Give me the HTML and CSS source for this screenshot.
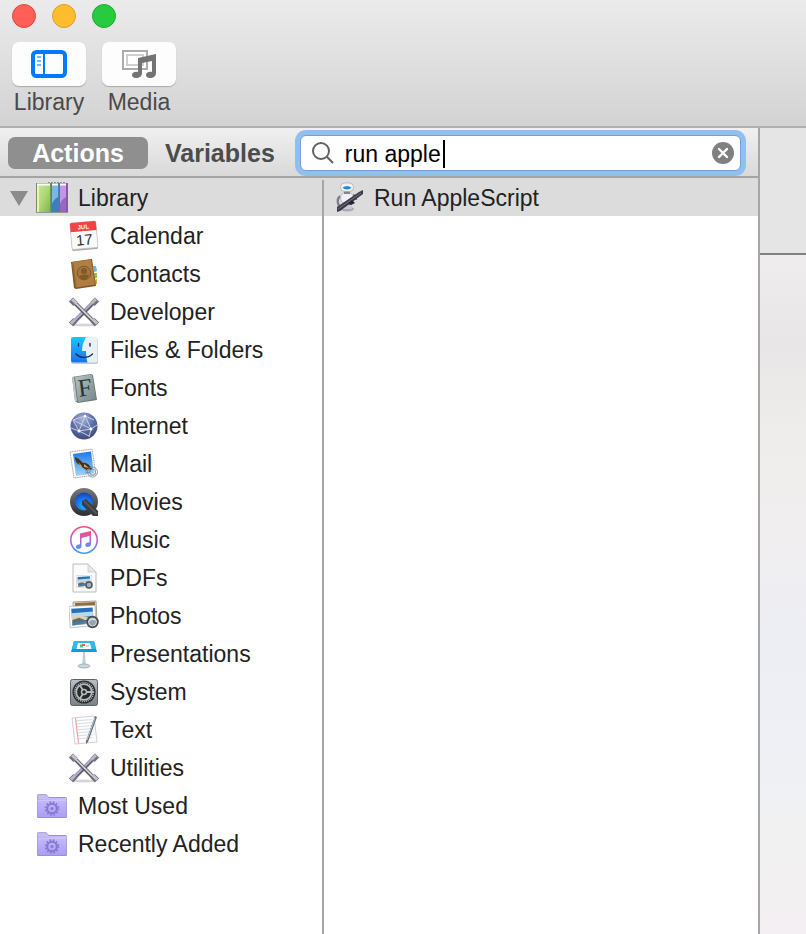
FILE: index.html
```html
<!DOCTYPE html>
<html lang="en">
<head>
<meta charset="utf-8">
<title>Automator</title>
<link rel="stylesheet" href="styles.css">
</head>
<body>
<svg class="defs" aria-hidden="true">
  <defs>
    <linearGradient id="folder" x1="0" y1="0" x2="0" y2="1"><stop offset="0" stop-color="#c3b9fb"/><stop offset="1" stop-color="#ab9ef3"/></linearGradient>
    <linearGradient id="green" x1="0" y1="0" x2="1" y2="1"><stop offset="0" stop-color="#c9e79b"/><stop offset=".5" stop-color="#aed877"/><stop offset="1" stop-color="#7cb944"/></linearGradient>
    <linearGradient id="sky" x1="0" y1="0" x2="0" y2="1"><stop offset="0" stop-color="#1d78e4"/><stop offset="1" stop-color="#a4d6fa"/></linearGradient>
    <linearGradient id="finder" x1="0" y1="0" x2="0" y2="1"><stop offset="0" stop-color="#1bc6fc"/><stop offset="1" stop-color="#1d70f1"/></linearGradient>
    <linearGradient id="slate" x1="0" y1="0" x2="1" y2="1"><stop offset="0" stop-color="#b6c2c2"/><stop offset="1" stop-color="#75878a"/></linearGradient>
    <radialGradient id="globe" cx=".45" cy=".25" r=".8"><stop offset="0" stop-color="#a7b4d6"/><stop offset=".5" stop-color="#5d6ea8"/><stop offset="1" stop-color="#3b4677"/></radialGradient>
    <radialGradient id="lens" cx=".5" cy=".75" r=".8"><stop offset="0" stop-color="#25b2ff"/><stop offset=".6" stop-color="#176ae8"/><stop offset="1" stop-color="#1638a0"/></radialGradient>
    <linearGradient id="dark" x1="0" y1="0" x2="0" y2="1"><stop offset="0" stop-color="#77797d"/><stop offset="1" stop-color="#2c2d31"/></linearGradient>
    <linearGradient id="tune" x1="0" y1="0" x2="0" y2="1"><stop offset="0" stop-color="#f3506f"/><stop offset=".5" stop-color="#ba60de"/><stop offset="1" stop-color="#3ba0f5"/></linearGradient>
    <linearGradient id="metal" x1="0" y1="0" x2="0" y2="1"><stop offset="0" stop-color="#b8c1c8"/><stop offset="1" stop-color="#798086"/></linearGradient>
    <symbol id="wrenches" viewBox="0 0 32 32">
      <ellipse cx="16" cy="29" rx="11" ry="1.500" fill="#d6d6d6"/>
      <path d="M27 5 5 27" stroke="#625f83" stroke-width="4"/><path d="M26.500 4.500 4.500 26.500" stroke="#b3b1c4" stroke-width="1.800"/>
      <path d="M29 3.500 24.500 8M7.500 24 3 28.500" stroke="#73727d" stroke-width="6"/><path d="M28 3 23.500 7.500M7 23.500 2.500 28" stroke="#b8b8c0" stroke-width="3"/>
      <path d="M5 5 27 27" stroke="#57545f" stroke-width="4"/><path d="M5 4.500 27 26.500" stroke="#cfced8" stroke-width="1.800"/>
      <path d="M3 3.500 7.500 8M24.500 24 29 28.500" stroke="#73727b" stroke-width="6"/><path d="M4 3 8.500 7.500M25 23.500 29.500 28" stroke="#c3c3ca" stroke-width="3"/>
      <path d="M1.500 5.500 5 2M27 2 30.500 5.500M1.500 26.500 5 30M27 30 30.500 26.500" stroke="#8f8ab0"/>
    </symbol>
    <symbol id="smart-folder" viewBox="0 0 32 32">
      <path d="M1 27V6q0-2 2-2h7l3 3h16q2 0 2 2v18q0 1-1 1H2q-1 0-1-1z" fill="#9b90cf"/>
      <path d="M1.500 9V6q0-1.500 1.500-1.500h7L13 8h16q1.500 0 1.500 2z" fill="#c5bcf5"/>
      <path d="M1.500 10h29v17H1.500z" fill="url(#folder)"/><path d="M1.500 10h29" stroke="#d8d0ff"/>
      <circle cx="16" cy="18.500" r="6.500" fill="none" stroke="#8477d2" stroke-width="1.600" stroke-dasharray="1.700 1.700"/>
      <circle cx="16" cy="18.500" r="4.800" fill="none" stroke="#8477d2" stroke-width="2"/><circle cx="16" cy="18.500" r="1.500" fill="#8477d2"/>
    </symbol>
    <symbol id="photo" viewBox="0 0 24 20">
      <path d="M0 1 23 0 24 18 1 20z" fill="#fff" stroke="#aaa" stroke-width=".6"/>
      <path d="M2 3 21 2l1 14L3 18z" fill="#286fbb"/><path d="m2.200 7 19-1.500.4 4L2.500 11z" fill="#b5d9ef"/>
      <path d="m2.500 10 7-1 12 3 .5 4L3 18z" fill="#ddd1b4"/><path d="m3 13 6-2 5 2 7 0v1l-18 2z" fill="#5f6d72"/><path d="m3 16 9-2 5 2-14 2z" fill="#3d80a9"/>
    </symbol>
  </defs>
</svg>

<div class="window">
  <header class="toolbar">
    <div class="lights">
      <button class="light close" aria-label="Close"></button>
      <button class="light minimize" aria-label="Minimize"></button>
      <button class="light expand" aria-label="Zoom"></button>
    </div>
    <div class="tools">
      <button class="tool">
        <span class="tool-face"><svg width="36" height="28" viewBox="0 0 36 28"><rect x="2" y="2" width="32" height="24" rx="3.500" fill="none" stroke="#007aff" stroke-width="4"/><path d="M13 3v22" stroke="#007aff" stroke-width="2"/><path d="M6 7h4M6 11h4M6 15h4" stroke="#75b5ff" stroke-width="2"/></svg></span>
        <span>Library</span>
      </button>
      <button class="tool">
        <span class="tool-face"><svg width="36" height="28" viewBox="0 0 36 28"><path d="M2 1h24v18H2z" fill="#fff" stroke="#acacac" stroke-width="2"/><path d="M6 5h16v10H6z" fill="none" stroke="#cfcfcf" stroke-width="2"/><path d="M17 8 35 4v19c0 3-2.500 5-6 5-2.500 0-4-1-4-3 0-2.500 3-4 6-3V11l-10 2v10c0 3-2.500 5-6 5-2.500 0-4-1-4-3 0-2.500 3-4 6-3z" fill="#737373"/></svg></span>
        <span>Media</span>
      </button>
    </div>
  </header>

  <div class="workspace">
    <section class="browser">
      <div class="filter">
        <button class="tab selected">Actions</button>
        <button class="tab">Variables</button>
        <div class="search">
          <svg class="glass" width="24" height="24" viewBox="0 0 24 24"><circle cx="10" cy="10" r="8" fill="none" stroke="#626262" stroke-width="2"/><path d="m15.800 15.800 6.200 6.200" stroke="#626262" stroke-width="2"/></svg>
          <input type="text" aria-label="Search actions" value="run apple">
          <span class="caret"></span>
          <button class="clear" aria-label="Clear search"><svg width="22" height="22" viewBox="0 0 22 22"><circle cx="11" cy="11" r="11" fill="#808080"/><path d="m7 7 8 8M15 7l-8 8" stroke="#fff" stroke-width="2.400" stroke-linecap="round"/></svg></button>
        </div>
      </div>

      <div class="columns">
        <ul class="list library">
          <li class="row root active"><button class="disclosure" aria-label="Collapse Library"><svg width="18" height="15" viewBox="0 0 18 15"><path d="M0 0h18L9 15z" fill="#8b8b8b"/></svg></button>
            <svg class="icon" viewBox="0 0 32 32"><path d="M0 1h15v30H0z" fill="#6f9557"/><path d="M1 2h13v28H1z" fill="url(#green)"/><path d="M1 2h2v28H1z" fill="#e9f4b1"/><path d="M15 1h8v30h-8z" fill="#4a7fae"/><path d="M16 2h6v28h-6z" fill="#7fb5e6"/><path d="M22 15q-4 2-6 7v8h6z" fill="#3b7fbe"/><path d="M23 1h9v30h-9z" fill="#8559a6"/><path d="M24 2h6v28h-6z" fill="#c693e8"/><path d="M30 15q-4 2-6 7v8h6z" fill="#9e63c6"/><path d="M1 2.500h13M16 2.500h6M24 2.500h6" stroke="#fff" stroke-width="2"/><path d="M0 30.500h32" stroke="#8b998e"/><path d="M12 .5h18" stroke="#8a9a8a" stroke-dasharray="2 1"/></svg>Library</li>
          <li class="row child"><svg class="icon" viewBox="0 0 32 32"><g transform="rotate(-5 16 16)"><rect x="3" y="3" width="26" height="27" rx="1.500" fill="#aaa"/><rect x="3" y="2" width="26" height="26.500" rx="1.500" fill="#fafafa" stroke="#bcbcbc" stroke-width=".6"/><path d="M3 3.500Q3 2 4.500 2h23Q29 2 29 3.500V11H3z" fill="#ee4544"/><text x="16" y="9" class="month">JUL</text><text x="16" y="25" class="day">17</text></g></svg>Calendar</li>
          <li class="row child"><svg class="icon" viewBox="0 0 32 32"><path d="m25 8 3 0 1 5-3 1z" fill="#69b7dc"/><path d="m26 15 3 0v5l-3 1z" fill="#8dc45d"/><path d="m26 22 3-1 0 5-3 1z" fill="#e9a046"/><path d="m3 4 20-3 1 0 4 27-20 3-2-1z" fill="#815724"/><path d="m4 4 19-2.500 4 25-19 3z" fill="#b07e42"/><path d="m5 4 3 25" stroke="#936632"/><circle cx="16" cy="15" r="6.800" fill="#a77639" stroke="#7b5828"/><circle cx="16" cy="13" r="3" fill="#805a2a"/><path d="M11 18.500c2-2 8-3 10-1-2 5-8 5-10 1z" fill="#805a2a"/></svg>Contacts</li>
          <li class="row child"><svg class="icon"><use href="#wrenches"/></svg>Developer</li>
          <li class="row child"><svg class="icon" viewBox="0 0 32 32"><rect x="3" y="4" width="27" height="26" rx="2" fill="#c7cbd0"/><rect x="3" y="3" width="26.500" height="25.500" rx="2" fill="#e9f0f8"/><path d="M5 3h13c-2.500 4.500-4 9-4 14h4c0 4 .5 8 1.500 11.500H5q-2 0-2-2V5q0-2 2-2z" fill="url(#finder)"/><path d="M10.500 9.500v2.500M22 9.500v2.500M8 20c4 4.500 12 4.500 16.500 0" fill="none" stroke="#13334f" stroke-width="1.400" stroke-linecap="round"/></svg>Files &amp; Folders</li>
          <li class="row child"><svg class="icon" viewBox="0 0 32 32"><path d="m4 5 19-3 2 1 4 25-19 3-3-2z" fill="#6b7677"/><path d="m7 5 17-2.500 4 24.500-18 3z" fill="url(#slate)"/><path d="m5 5 3 24" stroke="#bdc7c6" stroke-width="2"/><text x="17" y="24" class="font-f" transform="rotate(-7 17 16)">F</text></svg>Fonts</li>
          <li class="row child"><svg class="icon" viewBox="0 0 32 32"><circle cx="16" cy="16" r="13.500" fill="url(#globe)"/><path d="M5 10 17 6l9 4M5 10l6 11 10 5M17 6l-6 15M17 6l6 13 6-4M11 21l12-2-2 8M3 18l8 3M5 10l18 9" fill="none" stroke="#d0d8eb" stroke-width=".9"/><g fill="#fff"><circle cx="11" cy="21" r="1.500"/><circle cx="23" cy="19" r="1.500"/><circle cx="17" cy="6" r="1.200"/></g></svg>Internet</li>
          <li class="row child"><svg class="icon" viewBox="0 0 32 32"><path d="m2 4 22-3 4 26-22 3z" fill="#fafafa" stroke="#a7a7a7" stroke-dasharray="1.500 .7"/><path d="m5 6 18-2.500 3 22-18 2.500z" fill="url(#sky)"/><path d="m7 9 4 2 4 4c3-1 6 1 9 6l-2 2c-5-1-8-4-10-6-3-1-5-4-5-8z" fill="#443321"/><path d="m10 14 4 4-1 1zM16 16l5 4-5-1z" fill="#d3aa56"/><path d="m19 21 4 1-2 2z" fill="#f4f0d7"/><g fill="none" stroke="#718799" stroke-width=".8"><circle cx="24.500" cy="24" r="5"/><circle cx="24.500" cy="24" r="3"/><path d="m17 23 5-1M17 25l5-1"/></g></svg>Mail</li>
          <li class="row child"><svg class="icon" viewBox="0 0 32 32"><circle cx="16" cy="16" r="14" fill="url(#dark)"/><circle cx="16" cy="15.500" r="9" fill="url(#lens)"/><path d="m14 15 4-2 12 12v5h-5L14 19z" fill="#3b3c40"/><path d="m16 15 13 13" stroke="#55565b" stroke-width="2"/></svg>Movies</li>
          <li class="row child"><svg class="icon" viewBox="0 0 32 32"><circle cx="16" cy="16" r="13.200" fill="#fff" stroke="url(#tune)" stroke-width="1.600"/><path d="M12 9.500 23 7v13c0 2-1.500 3-3.500 3-3 0-3-4 .5-4.500l1.500-.3V12L13.500 14v8c0 2-1.500 3-3.500 3-3 0-3-4 .5-4.500l1.500-.3z" fill="url(#tune)"/></svg>Music</li>
          <li class="row child"><svg class="icon" viewBox="0 0 32 32"><path d="M5 2h15l8 8v20H5z" fill="#fbfbfb" stroke="#bbb"/><path d="M20 2v8h8z" fill="#e6e6e6" stroke="#c5c5c5" stroke-width=".7"/><use href="#photo" x="8" y="13" width="16" height="13"/><circle cx="21" cy="23" r="3" fill="#a1b3bf" stroke="#555" stroke-width="1.500"/></svg>PDFs</li>
          <li class="row child"><svg class="icon" viewBox="0 0 32 32"><path d="m5 2 23-1 1 20-23 1z" fill="#e7dec9" stroke="#a7a08b"/><path d="m7 3 20-1 0 4-20 1z" fill="#8e6e3f"/><use href="#photo" x="1" y="5" width="27" height="23"/><circle cx="24.500" cy="22" r="5" fill="#92a5b2" stroke="#4b4b4d" stroke-width="2.500"/><circle cx="24.500" cy="22" r="4" fill="none" stroke="#ddd"/><path d="m21 21 3-2 3 1" fill="none" stroke="#e6eef2"/></svg>Photos</li>
          <li class="row child"><svg class="icon" viewBox="0 0 32 32"><path d="M6 3h20l3 11H3z" fill="#139bdc"/><path d="M6 3h20l2 8H4z" fill="#31b9ee"/><path d="M10 5h12l1.500 6h-15z" fill="#fff"/><path d="M12 8h3" stroke="#42c681" stroke-width="3"/><path d="M14 7h3" stroke="#e94f87" stroke-width="2"/><path d="M18 8h3" stroke="#b7aaa3"/><path d="M15 14h2l.5 14h-3z" fill="#a3b6c1"/><path d="M16 14v13" stroke="#d5e1e8"/><ellipse cx="16" cy="28" rx="6" ry="2" fill="#c9d8e0" stroke="#899ba6" stroke-width=".7"/></svg>Presentations</li>
          <li class="row child"><svg class="icon" viewBox="0 0 32 32"><rect x="2.500" y="3.500" width="27" height="26" rx="2" fill="url(#metal)" stroke="#5e6468"/><circle cx="16" cy="16" r="11.500" fill="#272829"/><circle cx="16" cy="16" r="9.500" fill="none" stroke="#b7babc" stroke-width="1.500" stroke-dasharray="1 1"/><circle cx="16" cy="16" r="7.800" fill="none" stroke="#b7babc" stroke-width="1.800"/><circle cx="16" cy="16" r="2.500" fill="none" stroke="#b7babc" stroke-width="1.500"/><path d="m18 16 7 0M15 18l-3.500 5M15 14l-3.500-5" stroke="#b7babc" stroke-width="1.800"/></svg>System</li>
          <li class="row child"><svg class="icon" viewBox="0 0 32 32"><path d="m4 4 22-2 3 26-22 2z" fill="#fcfcfc" stroke="#c4c4c4" stroke-width=".8"/><path d="m7 7 17-1.500M7 10l17-1.500M8 13l16-1.500M8 16l16-1.500M8 19l16-1.500M9 22l15-1.500M9 25l15-1.500" stroke="#d2d6db" stroke-width=".8"/><path d="m7.500 4 3 25" stroke="#f09a9a"/><path d="m27 2 2 1-9 25-2 2v-3z" fill="#606c76"/><path d="m27 4-8 22" stroke="#b7c2ca"/></svg>Text</li>
          <li class="row child"><svg class="icon"><use href="#wrenches"/></svg>Utilities</li>
          <li class="row root"><span class="indent"></span><svg class="icon"><use href="#smart-folder"/></svg>Most Used</li>
          <li class="row root"><span class="indent"></span><svg class="icon"><use href="#smart-folder"/></svg>Recently Added</li>
        </ul>
        <div class="divider"></div>
        <ul class="list actions">
          <li class="row active"><svg class="icon" viewBox="0 0 32 32"><ellipse cx="13" cy="27" rx="7" ry="2.500" fill="#a9a9b2"/><path d="M6 14q-4 4-1 10M19 13q3 1 3 5" fill="none" stroke="#7d7d89" stroke-width="2.400"/><path d="M9 19h8l1 8H8z" fill="#c9c9d3"/><ellipse cx="13" cy="16" rx="6.500" ry="6" fill="#f1f1f5" stroke="#a5a5b0" stroke-width=".7"/><path d="M10 9h6v3h-6z" fill="#85858f"/><rect x="6.500" y="1" width="13" height="8.500" rx="4" fill="#f2f2f6" stroke="#a5a5b0" stroke-width=".7"/><path d="M8.500 5.500q4.500-3 9 0-1 2-4.500 2t-4.500-2z" fill="#258bd8"/><path d="m3 25 22-15 4-2v4L6 29l-3 1z" fill="#3c3a49"/><path d="m4 27 23-16" stroke="#777384"/><path d="m14 22 4-4 3 3-4 2z" fill="#252431"/></svg>Run AppleScript</li>
        </ul>
      </div>
    </section>
    <main class="editor"><div class="editor-head"></div><div class="canvas"></div></main>
  </div>
</div>
</body>
</html>
```
FILE: styles.css
```css
* { box-sizing: border-box; }
body { margin: 0; font-family: "Liberation Sans", Arial, sans-serif; font-size: 23px; line-height: 28px; color: #222; }
button { border: 0; padding: 0; margin: 0; background: none; font: inherit; color: inherit; }
svg { display: block; flex: none; }
.defs { position: absolute; width: 0; height: 0; }
.window { min-height: 100vh; display: flex; flex-direction: column; }

.toolbar { padding: 4px 12px 10px; background: linear-gradient(#ebebeb, #d3d3d3); border-bottom: 2px solid #b0b0b0; }
.lights { display: flex; gap: 16px; }
.light { width: 24px; height: 24px; border-radius: 50%; }
.close { background: #ff5f57; border: 1px solid #e2463f; }
.minimize { background: #ffbd2e; border: 1px solid #dfa023; }
.expand { background: #28cb40; border: 1px solid #1cab2c; }
.tools { display: flex; gap: 16px; margin-top: 14px; }
.tool { width: 74px; color: #4a4a4a; display: flex; flex-direction: column; align-items: center; gap: 2px; }
.tool-face { width: 100%; height: 44px; display: flex; align-items: center; justify-content: center; background: #fdfdfd; border-radius: 7px; box-shadow: 0 1px 1px #aaa; }

.workspace { flex: 1; display: flex; }
.browser { flex: 1; display: flex; flex-direction: column; border-right: 2px solid #a6a6a6; min-width: 0; }
.filter { height: 50px; display: flex; align-items: center; padding: 2px 17px 0 8px; background: linear-gradient(#f0f0f0, #d9d9d9); border-bottom: 2px solid #a4a4a4; }
.tab { height: 32px; padding: 0 11px; font-size: 25px; font-weight: bold; color: #4c4c4c; border-radius: 7px; }
.tab.selected { width: 140px; margin-right: 6px; background: #8f8f8f; color: #fff; }
.search { position: relative; flex: 1; height: 36px; margin-left: 14px; padding: 0 6px 0 10px; display: flex; align-items: center; background: #fff; border: 1px solid #6fa0da; border-radius: 6px; box-shadow: 0 0 0 5px #90bff1; }
.search input { flex: 1; min-width: 0; margin-left: 10px; padding: 2px 0 0; border: 0; outline: 0; background: none; font: inherit; color: #000; }
.caret { position: absolute; left: 142px; top: 4px; width: 2px; height: 28px; background: #000; }

.columns { flex: 1; display: grid; grid-template-columns: minmax(0, 322fr) 2px minmax(0, 434fr); background: #fff; }
.divider { background: linear-gradient(#dcdcdc 2px, #a6a6a6 2px); }
.list { list-style: none; margin: 0; padding: 0; }
.row { height: 38px; display: flex; align-items: center; gap: 10px; padding: 2px 0 0 10px; white-space: nowrap; }
.row.active { background: #dcdcdc; }
.row.root { padding-left: 8px; }
.row.child { padding-left: 68px; }
.actions .row { gap: 8px; }
.disclosure, .indent { width: 18px; display: flex; justify-content: center; }
.disclosure { margin-left: 2px; margin-right: -2px; }
.icon { width: 32px; height: 32px; }
.month { font-size: 6px; font-weight: bold; fill: #fff; text-anchor: middle; }
.day { font-size: 15px; fill: #333; text-anchor: middle; }
.font-f { font-family: "Liberation Serif", serif; font-size: 25px; fill: #293638; text-anchor: middle; }

.editor { width: 46px; display: flex; flex-direction: column; }
.editor-head { height: 127px; background: #e5e5e5; border-bottom: 2px solid #808080; }
.canvas { flex: 1; background: linear-gradient(#eeecec, #e9e6e7 13%, #f0eeec 30%, #f0eeef 42%, #edeef4 56%, #eef0f5 72%, #f1f1f1 86%, #f3eff2); }
```
